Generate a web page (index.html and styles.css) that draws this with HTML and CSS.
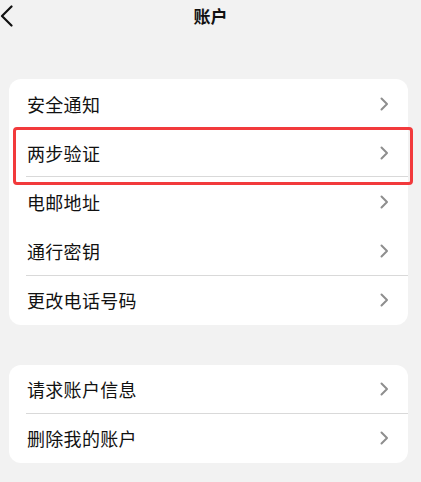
FILE: index.html
```html
<!DOCTYPE html>
<html lang="zh">
<head>
<meta charset="utf-8">
<link rel="stylesheet" href="styles.css">
</head>
<body>
<header class="nav">
  <svg class="back" width="14" height="22" viewBox="0 0 14 22"><path d="M11.5 1.5 L2 11 L11.5 20.5" fill="none" stroke="#111" stroke-width="2.2" stroke-linecap="round" stroke-linejoin="round"/></svg>
  <h1 class="title">账户</h1>
</header>
<main>
  <section class="card first">
    <div class="row"><span class="label">安全通知</span><svg class="chev" viewBox="0 0 9 14"><path d="M1.5 1.5 L7 7 L1.5 12.5" fill="none" stroke="#8e8e8e" stroke-width="2" stroke-linecap="round" stroke-linejoin="round"/></svg></div>
    <div class="row sep highlight"><span class="label">两步验证</span><svg class="chev" viewBox="0 0 9 14"><path d="M1.5 1.5 L7 7 L1.5 12.5" fill="none" stroke="#8e8e8e" stroke-width="2" stroke-linecap="round" stroke-linejoin="round"/></svg><span class="mark"></span></div>
    <div class="row"><span class="label">电邮地址</span><svg class="chev" viewBox="0 0 9 14"><path d="M1.5 1.5 L7 7 L1.5 12.5" fill="none" stroke="#8e8e8e" stroke-width="2" stroke-linecap="round" stroke-linejoin="round"/></svg></div>
    <div class="row sep"><span class="label">通行密钥</span><svg class="chev" viewBox="0 0 9 14"><path d="M1.5 1.5 L7 7 L1.5 12.5" fill="none" stroke="#8e8e8e" stroke-width="2" stroke-linecap="round" stroke-linejoin="round"/></svg></div>
    <div class="row"><span class="label">更改电话号码</span><svg class="chev" viewBox="0 0 9 14"><path d="M1.5 1.5 L7 7 L1.5 12.5" fill="none" stroke="#8e8e8e" stroke-width="2" stroke-linecap="round" stroke-linejoin="round"/></svg></div>
  </section>
  <section class="card second">
    <div class="row sep"><span class="label">请求账户信息</span><svg class="chev" viewBox="0 0 9 14"><path d="M1.5 1.5 L7 7 L1.5 12.5" fill="none" stroke="#8e8e8e" stroke-width="2" stroke-linecap="round" stroke-linejoin="round"/></svg></div>
    <div class="row"><span class="label">删除我的账户</span><svg class="chev" viewBox="0 0 9 14"><path d="M1.5 1.5 L7 7 L1.5 12.5" fill="none" stroke="#8e8e8e" stroke-width="2" stroke-linecap="round" stroke-linejoin="round"/></svg></div>
  </section>
</main>
</body>
</html>
```
FILE: styles.css
```css
html, body {
  margin: 0;
  padding: 0;
}
body {
  background: #f2f2f2;
  font-family: "Noto Sans CJK SC", "Noto Sans", sans-serif;
  color: #111;
  width: 421px;
  height: 482px;
  overflow: hidden;
}
.nav {
  position: relative;
  height: 32px;
  display: flex;
  align-items: center;
  justify-content: center;
}
.back {
  position: absolute;
  left: 0;
  top: 5px;
}
.title {
  margin: 0;
  font-size: 17px;
  font-weight: 700;
  line-height: 32px;
  color: #111;
}
main {
  padding: 47px 13px 0 9px;
  display: flex;
  flex-direction: column;
  gap: 40px;
}
.card {
  background: #fff;
  border-radius: 12px;
}
.row {
  position: relative;
  height: 49.2px;
  display: flex;
  align-items: center;
  justify-content: space-between;
  padding: 0 19px 0 18px;
}
.card.second .row {
  height: 49px;
}
.row.sep::after {
  content: "";
  position: absolute;
  left: 17px;
  right: 0;
  bottom: 0;
  height: 1px;
  background: #d9d9d9;
}
.label {
  font-size: 18px;
  line-height: 24px;
  letter-spacing: 0.3px;
}
.chev {
  width: 9px;
  height: 14px;
}
.mark {
  position: absolute;
  left: 4px;
  right: -5px;
  top: -1px;
  bottom: -8px;
  border: 3px solid #f23a3c;
  border-radius: 4px;
  pointer-events: none;
}
```
